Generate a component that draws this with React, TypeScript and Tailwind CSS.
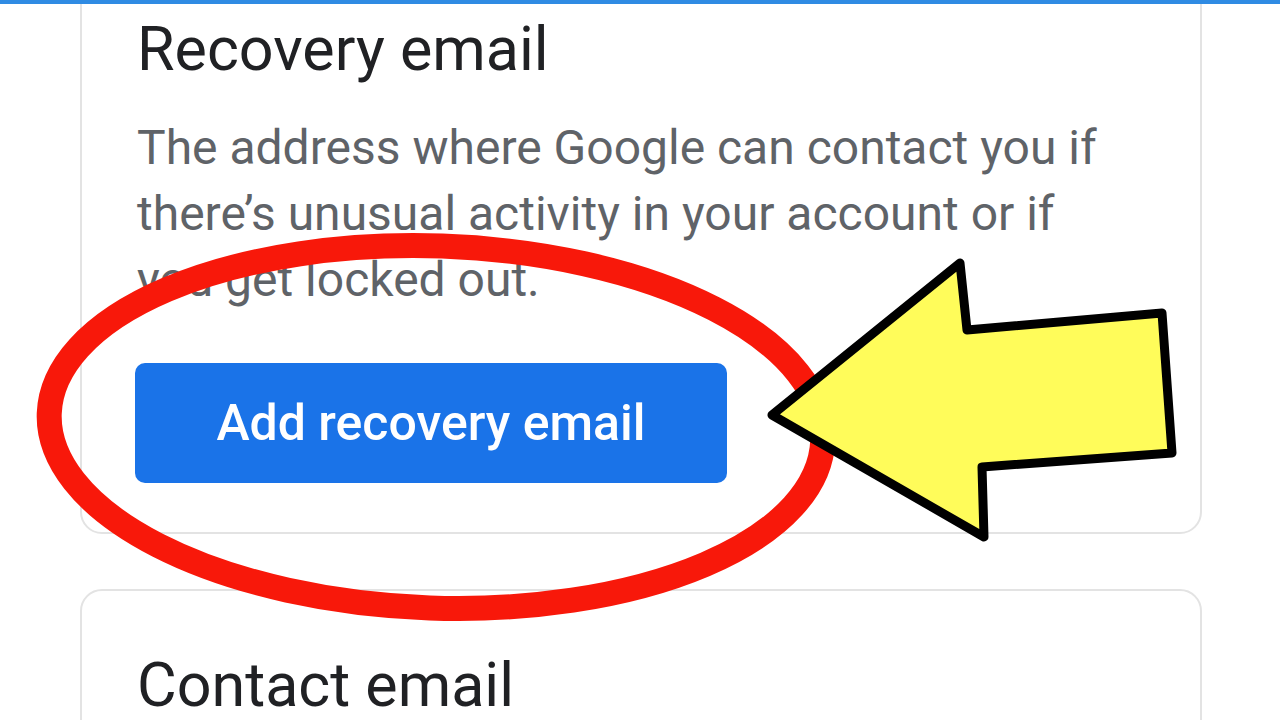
import React from 'react';

function Annotation() {
  return (
    <svg
      className="absolute inset-0 pointer-events-none"
      width={1280}
      height={720}
      viewBox="0 0 1280 720"
    >
      <ellipse
        cx={436}
        cy={427}
        rx={387}
        ry={181}
        fill="none"
        stroke="#f8180a"
        strokeWidth={25}
        transform="rotate(2 436 427)"
      />
      <polygon
        points="772,415 960,263 967,330 1162,313 1172,453 982,467 984,537"
        fill="#fffc5a"
        stroke="#000"
        strokeWidth={9}
        strokeLinejoin="round"
      />
    </svg>
  );
}

export default function App() {
  return (
    <div className="relative w-[1280px] h-[720px] overflow-hidden bg-white font-['Roboto',sans-serif]">
      <div className="relative z-10 h-[4px] bg-[#2f8be3]" />

      <div className="-mt-[44px] ml-[80px] w-[1122px] rounded-[22px] border-2 border-[#e3e3e3] pt-[51px] pb-[49px] px-[55px]">
        <h2 className="text-[61px] leading-[72px] text-[#202124]">Recovery email</h2>
        <p className="mt-[30px] w-[980px] text-[48px] leading-[66px] text-[#5f6368]">
          The address where Google can contact you if there’s unusual activity in your account or if you get locked out.
        </p>
        <button className="mt-[50px] h-[120px] w-[592px] -ml-[2px] rounded-[10px] bg-[#1a73e8] text-white text-[50px] font-medium">
          Add recovery email
        </button>
      </div>

      <div className="mt-[55px] ml-[80px] w-[1122px] rounded-[22px] border-2 border-[#e3e3e3] pt-[58px] px-[55px] h-[200px]">
        <h2 className="text-[61px] leading-[72px] text-[#202124]">Contact email</h2>
      </div>

      <Annotation />
    </div>
  );
}
